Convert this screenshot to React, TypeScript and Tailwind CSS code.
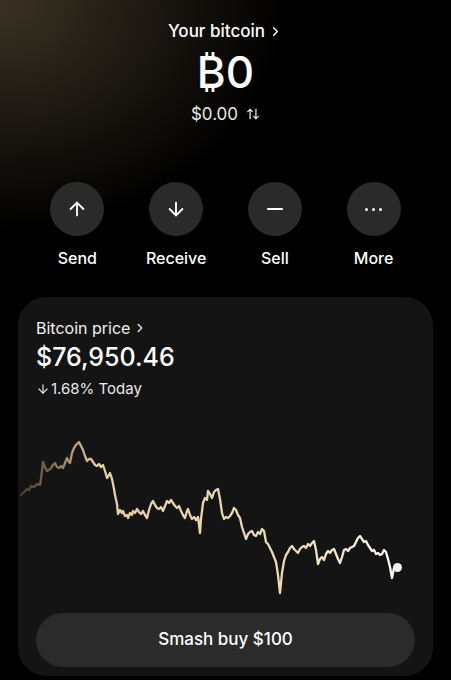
import { ArrowUp, ArrowDown, Minus, ChevronRight, ArrowUpDown } from 'lucide-react';

const chartPoints = [
  [21, 494], [24, 491], [27, 488], [29, 489], [31, 485], [34, 486], [37, 483], [40, 484], [41, 478],
  [43, 461], [45, 466], [47, 470], [49, 469], [51, 467], [53, 464], [55, 462], [57, 466], [59, 467],
  [61, 465], [63, 467], [65, 462], [67, 457], [69, 461], [70, 462], [72, 452], [74, 447], [76, 444],
  [79, 441], [81, 445], [83, 449], [85, 455], [87, 460], [89, 458], [91, 458], [93, 461], [95, 464],
  [97, 465], [99, 463], [101, 466], [103, 464], [105, 470], [107, 477], [109, 474], [110, 472],
  [112, 478], [114, 488], [115, 494], [117, 503], [118, 513], [120, 509], [122, 512], [123, 510],
  [125, 515], [127, 514], [128, 517], [130, 512], [132, 514], [133, 510], [135, 512], [137, 508],
  [139, 511], [141, 513], [143, 510], [145, 514], [147, 517], [149, 509], [151, 503], [153, 500],
  [155, 504], [157, 507], [159, 508], [161, 506], [163, 510], [165, 505], [167, 500], [169, 502],
  [171, 499], [173, 502], [175, 505], [177, 507], [179, 505], [181, 510], [183, 514], [185, 517],
  [187, 510], [188, 508], [190, 514], [192, 518], [194, 516], [196, 519], [198, 516], [200, 532],
  [201, 518], [203, 502], [205, 497], [207, 499], [208, 490], [210, 493], [212, 497], [214, 491],
  [216, 489], [218, 488], [220, 498], [222, 512], [224, 518], [226, 516], [228, 517], [230, 515],
  [232, 512], [234, 507], [236, 509], [238, 514], [240, 517], [242, 526], [244, 532], [246, 538],
  [248, 533], [250, 531], [252, 530], [254, 534], [256, 535], [258, 531], [260, 533], [262, 528],
  [264, 530], [266, 541], [268, 543], [270, 547], [272, 551], [274, 556], [276, 561], [278, 574],
  [280, 592], [282, 572], [284, 560], [286, 554], [288, 551], [290, 547], [292, 545], [294, 548],
  [296, 550], [298, 552], [300, 548], [302, 546], [304, 545], [306, 547], [308, 543], [310, 545],
  [312, 542], [314, 540], [316, 549], [318, 563], [320, 558], [322, 556], [324, 559], [326, 553],
  [328, 550], [330, 552], [332, 549], [334, 548], [336, 553], [338, 558], [340, 562], [342, 556],
  [344, 549], [346, 548], [348, 550], [350, 547], [352, 546], [354, 545], [356, 541], [358, 537],
  [360, 535], [362, 538], [364, 541], [366, 540], [368, 544], [370, 547], [372, 550], [374, 549],
  [376, 553], [378, 552], [380, 554], [382, 553], [384, 549], [386, 551], [388, 558], [390, 566],
  [392, 577], [393, 572], [394, 567], [397, 567],
];

const actions = [
  { label: 'Send', icon: <ArrowUp size={22} strokeWidth={2} /> },
  { label: 'Receive', icon: <ArrowDown size={22} strokeWidth={2} /> },
  { label: 'Sell', icon: <Minus size={24} strokeWidth={2.2} /> },
  {
    label: 'More',
    icon: (
      <div className="flex gap-[4px]">
        <span className="w-[3px] h-[3px] rounded-full bg-white" />
        <span className="w-[3px] h-[3px] rounded-full bg-white" />
        <span className="w-[3px] h-[3px] rounded-full bg-white" />
      </div>
    ),
  },
];

export default function App() {
  return (
    <div
      className="w-[451px] h-[680px] overflow-hidden bg-black bg-[radial-gradient(ellipse_75%_40%_at_0%_0%,#3a3224_0%,#1c1811_45%,#000000_85%)] text-white"
      style={{ fontFamily: 'Inter, "Noto Sans", sans-serif' }}
    >
      {/* balance header */}
      <div className="flex flex-col items-center pt-[19px]">
        <div className="flex items-center gap-[3px] text-[17px] leading-[24px] font-medium">
          Your bitcoin
          <ChevronRight size={15} strokeWidth={2.2} />
        </div>
        <div className="mt-[3px] text-[44px] leading-[52px] font-medium">₿0</div>
        <div className="mt-[4px] flex items-center gap-[8px] text-[17px] leading-[24px] text-[#e8e8e8]">
          $0.00
          <ArrowUpDown size={14} strokeWidth={2.2} />
        </div>
      </div>

      {/* actions */}
      <div className="grid grid-cols-4 px-[28px] mt-[56px]">
        {actions.map((a) => (
          <div key={a.label} className="flex flex-col items-center">
            <div className="w-[54px] h-[54px] rounded-full bg-[#2a2a2a] flex items-center justify-center">
              {a.icon}
            </div>
            <div className="mt-[12px] text-[16px] leading-[20px] font-medium">{a.label}</div>
          </div>
        ))}
      </div>

      {/* price card */}
      <div className="mx-[18px] mt-[29px] rounded-[28px] bg-[#141414] pt-[20px] pb-[9px]">
        <div className="px-[18px]">
          <div className="flex items-center gap-[3px] text-[16px] leading-[22px] text-[#f0f0f0]">
            Bitcoin price
            <ChevronRight size={14} strokeWidth={2.2} />
          </div>
          <div className="mt-[2px] text-[25px] leading-[32px] font-medium">$76,950.46</div>
          <div className="mt-[6px] flex items-center gap-[1px] text-[15px] leading-[20px] text-[#e8e8e8]">
            <ArrowDown size={14} strokeWidth={2} />
            1.68% Today
          </div>
        </div>

        <svg width="415" height="168" viewBox="18 432 415 168" className="block mt-[34px]">
          <defs>
            <linearGradient id="line" gradientUnits="userSpaceOnUse" x1="20" y1="0" x2="400" y2="0">
              <stop offset="0" stopColor="#4a3d2c" />
              <stop offset="0.08" stopColor="#7d6b50" />
              <stop offset="0.2" stopColor="#e3cda4" />
              <stop offset="0.75" stopColor="#ecdcba" />
              <stop offset="1" stopColor="#ffffff" />
            </linearGradient>
          </defs>
          <polyline
            points={chartPoints.map((p) => p.join(',')).join(' ')}
            fill="none"
            stroke="url(#line)"
            strokeWidth="2.3"
            strokeLinejoin="round"
            strokeLinecap="round"
          />
          <circle cx="397.5" cy="566.5" r="4.5" fill="#f5efe6" />
        </svg>

        <div className="px-[18px] mt-[12px]">
          <button className="w-full h-[54px] rounded-full bg-[#2b2b2b] text-[17px] font-medium text-white">
            Smash buy $100
          </button>
        </div>
      </div>
    </div>
  );
}
